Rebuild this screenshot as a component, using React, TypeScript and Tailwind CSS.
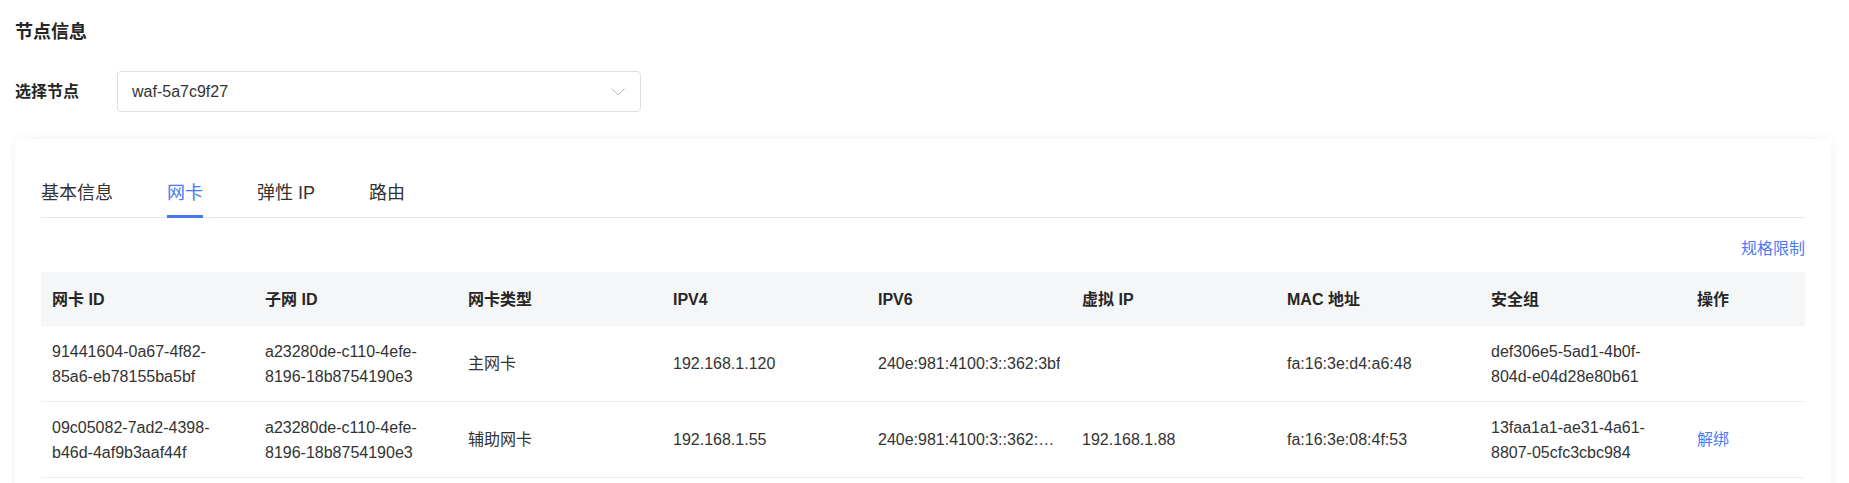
import { Fragment } from 'react'

const tabs = ['基本信息', '网卡', '弹性 IP', '路由']

const columns = ['网卡 ID', '子网 ID', '网卡类型', 'IPV4', 'IPV6', '虚拟 IP', 'MAC 地址', '安全组', '操作']

const nics = [
  {
    id: '91441604-0a67-4f82-85a6-eb78155ba5bf',
    subnet: 'a23280de-c110-4efe-8196-18b8754190e3',
    type: '主网卡',
    ipv4: '192.168.1.120',
    ipv6: '240e:981:4100:3::362:3bf',
    vip: '',
    mac: 'fa:16:3e:d4:a6:48',
    sg: 'def306e5-5ad1-4b0f-804d-e04d28e80b61',
    primary: true,
  },
  {
    id: '09c05082-7ad2-4398-b46d-4af9b3aaf44f',
    subnet: 'a23280de-c110-4efe-8196-18b8754190e3',
    type: '辅助网卡',
    ipv4: '192.168.1.55',
    ipv6: '240e:981:4100:3::362:3c0a',
    vip: '192.168.1.88',
    mac: 'fa:16:3e:08:4f:53',
    sg: '13faa1a1-ae31-4a61-8807-05cfc3cbc984',
    primary: false,
  },
]

// uuid can wrap after every hyphen
function Uuid({ value }: { value: string }) {
  const parts = value.split('-')
  return (
    <>
      {parts.map((p, i) => (
        <Fragment key={i}>
          {p}
          {i < parts.length - 1 && <>-<wbr /></>}
        </Fragment>
      ))}
    </>
  )
}

function Cell({ children, head }: { children?: React.ReactNode; head?: boolean }) {
  return (
    <div className={`flex items-center pl-[11px] ${head ? 'h-[54px] bg-[#f5f6f8] font-bold text-[#262626]' : 'h-[76px] border-b border-[#ebeef5] text-[#333]'}`}>
      <div className="max-w-[183.5px] leading-[25px]">{children}</div>
    </div>
  )
}

export default function App() {
  return (
    <div className="min-h-screen bg-white pl-[15px] pr-[18px] pt-[18px] font-['Liberation_Sans','Noto_Sans_CJK_SC',sans-serif] text-[16px] text-[#333]">
      <h2 className="h-[28px] text-[18px] leading-[28px] font-bold text-[#262626]">节点信息</h2>

      <div className="mt-[25px] flex items-center">
        <label className="w-[102px] font-bold text-[#262626]">选择节点</label>
        <button className="flex h-[41px] w-[524px] items-center justify-between rounded-[4px] border border-[#dcdfe6] bg-white pl-[14px] pr-[15px] text-left">
          <span>waf-5a7c9f27</span>
          <svg width="14" height="8" viewBox="0 0 14 8" fill="none">
            <path d="M0.5 0.5 L7 7 L13.5 0.5" stroke="#b8bcc4" strokeWidth="1" />
          </svg>
        </button>
      </div>

      <div className="mt-[27px] rounded-[6px] bg-white px-[26px] pt-[27px] pb-6 shadow-[0_0_12px_rgba(0,0,0,0.06)]">
        <div className="flex gap-[54px] border-b border-[#e4e7ed]">
          {tabs.map((t) => (
            <div
              key={t}
              className={`relative flex h-[51px] items-center pt-[4px] text-[18px] ${t === '网卡' ? 'text-[#4677f6]' : 'text-[#333]'}`}
            >
              {t}
              {t === '网卡' && <span className="absolute -bottom-px left-0 right-0 h-[3px] bg-[#4677f6]" />}
            </div>
          ))}
        </div>

        <div className="mt-[21px] flex justify-end leading-[20px]">
          <a className="cursor-pointer text-[#4a7bfb]">规格限制</a>
        </div>

        <div className="mt-[13px] grid grid-cols-[213px_203px_205px_205px_204px_205px_204px_206px_1fr]">
          {columns.map((c) => (
            <Cell key={c} head>{c}</Cell>
          ))}
          {nics.map((n) => (
            <Fragment key={n.id}>
              <Cell><Uuid value={n.id} /></Cell>
              <Cell><Uuid value={n.subnet} /></Cell>
              <Cell>{n.type}</Cell>
              <Cell>{n.ipv4}</Cell>
              <Cell><span className="block max-w-[183.5px] truncate">{n.ipv6}</span></Cell>
              <Cell>{n.vip}</Cell>
              <Cell>{n.mac}</Cell>
              <Cell><Uuid value={n.sg} /></Cell>
              <Cell>{!n.primary && <a className="cursor-pointer text-[#4a7bfb]">解绑</a>}</Cell>
            </Fragment>
          ))}
        </div>
      </div>
    </div>
  )
}
